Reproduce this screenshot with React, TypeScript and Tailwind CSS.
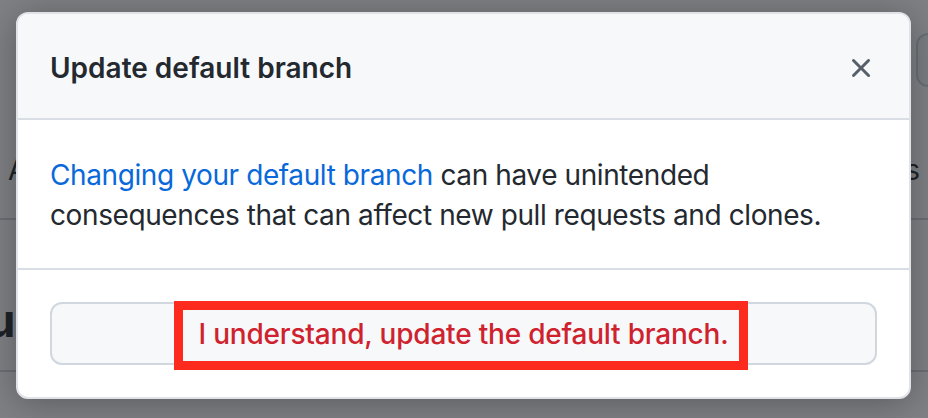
export default function App() {
  const font = { fontFamily: 'Inter, "Noto Sans", sans-serif' };
  return (
    <div className="relative w-[928px] h-[418px] overflow-hidden bg-white text-[#24292f]" style={font}>
      {/* page behind the dialog */}
      <div className="flex flex-col w-full">
        <div className="h-[220px] border-b-2 border-[#d0d7de] flex flex-col">
          <div className="h-[150px] flex justify-end pt-[33px]">
            <div className="w-[40px] h-[54px] -mr-[28px] rounded-[12px] border-2 border-[#d0d7de] bg-[#f6f8fa]" />
          </div>
          <div className="flex justify-between px-[8px] text-[28px] leading-[40px]">
            <span>Actions</span>
            <span>Settings</span>
          </div>
        </div>
        <div className="mt-[72px] h-[80px] border-b-2 border-[#d0d7de] overflow-hidden">
          <div className="-ml-[118px] text-[46px] leading-[56px] font-bold whitespace-nowrap">Default branch</div>
        </div>
        <div className="pt-[40px] px-[8px] text-[28px] leading-[40px] whitespace-nowrap">
          The default branch is considered the base branch in your repository, against which all pull requests
        </div>
      </div>

      {/* overlay */}
      <div className="absolute inset-0 bg-[rgba(27,31,36,0.56)]" />

      {/* dialog */}
      <div className="absolute left-[16px] top-[12px] w-[895px] rounded-[12px] border-2 border-[#dfe2e6] bg-white shadow-[0_4px_36px_rgba(0,0,0,0.3)] overflow-hidden">
        <div className="h-[106px] pt-[34px] pl-[32px] pr-[32px] flex items-start justify-between bg-[#f6f8fa] border-b-2 border-[#d8dee4]">
          <h1 className="text-[28px] leading-[40px] font-semibold text-[#24292f]">Update default branch</h1>
          <svg width="32" height="32" viewBox="0 0 16 16" className="mt-[4px]" fill="#57606a">
            <path d="M3.72 3.72a.75.75 0 0 1 1.06 0L8 6.94l3.22-3.22a.749.749 0 0 1 1.275.326.749.749 0 0 1-.215.734L9.06 8l3.22 3.22a.749.749 0 0 1-.326 1.275.749.749 0 0 1-.734-.215L8 9.06l-3.22 3.22a.751.751 0 0 1-1.042-.018.751.751 0 0 1-.018-1.042L6.94 8 3.72 4.78a.75.75 0 0 1 0-1.06Z" />
          </svg>
        </div>
        <div className="pt-[35px] pb-[33px] px-[32px] border-b-2 border-[#d8dee4] text-[28px] leading-[40px] tracking-[-0.4px]">
          <p>
            <span className="text-[#0969da]">Changing your default branch</span> can have unintended
            <br />
            consequences that can affect new pull requests and clones.
          </p>
        </div>
        <div className="p-[32px] pb-[32px]">
          <div className="h-[63px] w-full rounded-[12px] border-2 border-[#d0d7de] bg-[#f6f8fa] flex items-center justify-center text-[28px] font-medium tracking-[-0.2px] text-[#cf222e]">
            I understand, update the default branch.
          </div>
        </div>
        <div className="absolute left-[156px] top-[287px] w-[574px] h-[69px] border-[9px] border-[#fd2a1e]" />
      </div>
    </div>
  );
}
